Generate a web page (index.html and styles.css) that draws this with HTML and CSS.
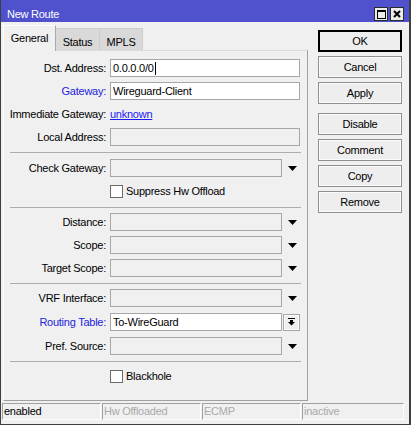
FILE: index.html
```html
<!DOCTYPE html>
<html>
<head>
<meta charset="utf-8">
<title>New Route</title>
<link rel="stylesheet" href="styles.css">
</head>
<body>
<div class="window">
  <div class="titlebar">
    <span class="title">New Route</span>
    <div class="tb-btns">
      <span class="tb-btn"><svg width="9" height="9" viewBox="0 0 9 9"><rect x="0.5" y="0.5" width="8" height="8" fill="none" stroke="#000"/><rect x="0" y="0" width="9" height="2" fill="#000"/></svg></span>
      <span class="tb-btn"><svg width="8" height="8" viewBox="0 0 8 8"><path d="M1 1 L7 7 M7 1 L1 7" stroke="#000" stroke-width="2" fill="none"/></svg></span>
    </div>
  </div>
  <div class="main">
    <div class="left">
      <div class="tabs">
        <div class="tab active">General</div>
        <div class="tab t-status">Status</div>
        <div class="tab t-mpls">MPLS</div>
      </div>
      <div class="panel">
        <div class="group g1">
          <div class="row"><span class="lbl">Dst. Address:</span><div class="field filled">0.0.0.0/0<span class="caret"></span></div></div>
          <div class="row"><span class="lbl blue">Gateway:</span><div class="field filled">Wireguard-Client</div></div>
          <div class="row"><span class="lbl">Immediate Gateway:</span><span class="link">unknown</span></div>
          <div class="row"><span class="lbl">Local Address:</span><div class="field"></div></div>
        </div>
        <div class="sep"></div>
        <div class="group g2">
          <div class="row"><span class="lbl">Check Gateway:</span><div class="field short"></div><span class="arrow"><svg width="9" height="5" viewBox="0 0 9 5"><polygon points="0,0 9,0 4.5,5" fill="#000"/></svg></span></div>
          <div class="row"><span class="lbl"></span><span class="check"></span><span class="check-text">Suppress Hw Offload</span></div>
        </div>
        <div class="sep"></div>
        <div class="group g3">
          <div class="row"><span class="lbl">Distance:</span><div class="field short"></div><span class="arrow"><svg width="9" height="5" viewBox="0 0 9 5"><polygon points="0,0 9,0 4.5,5" fill="#000"/></svg></span></div>
          <div class="row"><span class="lbl">Scope:</span><div class="field short"></div><span class="arrow"><svg width="9" height="5" viewBox="0 0 9 5"><polygon points="0,0 9,0 4.5,5" fill="#000"/></svg></span></div>
          <div class="row"><span class="lbl">Target Scope:</span><div class="field short"></div><span class="arrow"><svg width="9" height="5" viewBox="0 0 9 5"><polygon points="0,0 9,0 4.5,5" fill="#000"/></svg></span></div>
        </div>
        <div class="sep"></div>
        <div class="group g4">
          <div class="row"><span class="lbl">VRF Interface:</span><div class="field short"></div><span class="arrow"><svg width="9" height="5" viewBox="0 0 9 5"><polygon points="0,0 9,0 4.5,5" fill="#000"/></svg></span></div>
          <div class="row"><span class="lbl blue">Routing Table:</span><div class="field short filled">To-WireGuard</div><span class="ddbtn"><svg width="7" height="8" viewBox="0 0 7 8"><rect x="0" y="0" width="7" height="1" fill="#000"/><rect x="2" y="2" width="3" height="2" fill="#000"/><polygon points="0,4 7,4 3.5,7.5" fill="#000"/></svg></span></div>
          <div class="row"><span class="lbl">Pref. Source:</span><div class="field short"></div><span class="arrow"><svg width="9" height="5" viewBox="0 0 9 5"><polygon points="0,0 9,0 4.5,5" fill="#000"/></svg></span></div>
        </div>
        <div class="sep"></div>
        <div class="group g5">
          <div class="row"><span class="lbl"></span><span class="check"></span><span class="check-text">Blackhole</span></div>
        </div>
      </div>
    </div>
    <div class="buttons">
      <div class="btn default">OK</div>
      <div class="btn">Cancel</div>
      <div class="btn">Apply</div>
      <div class="btn spaced">Disable</div>
      <div class="btn">Comment</div>
      <div class="btn">Copy</div>
      <div class="btn">Remove</div>
    </div>
  </div>
  <div class="statusbar">
    <div class="sfield">enabled</div>
    <div class="sfield dim">Hw Offloaded</div>
    <div class="sfield dim">ECMP</div>
    <div class="sfield dim last">inactive</div>
  </div>
</div>
</body>
</html>
```

FILE: styles.css
```css
* { box-sizing: border-box; }
html, body { margin: 0; padding: 0; }
body {
  width: 411px;
  height: 425px;
  overflow: hidden;
  background: #f0f0f0;
  font-family: "Liberation Sans", Arial, sans-serif;
  font-size: 11px;
  letter-spacing: -0.25px;
  color: #000;
}
.window {
  width: 411px;
  height: 425px;
  display: flex;
  flex-direction: column;
  background: #f0f0f0;
  border-left: 1px solid #3f3f3f;
  border-right: 2px solid #3f3f3f;
  border-bottom: 1px solid #3f3f3f;
}
.titlebar {
  height: 22px;
  flex: none;
  background: #4f52cc;
  color: #fff;
  display: flex;
  align-items: flex-end;
  justify-content: space-between;
  padding: 0 5px 1px 6px;
}
.title { line-height: 14px; }
.tb-btns { display: flex; gap: 2px; }
.tb-btn {
  width: 14px;
  height: 14px;
  background: #ececec;
  border: 1px solid #2b2b2b;
  display: flex;
  align-items: center;
  justify-content: center;
}
.main {
  display: flex;
  padding: 3px 0 0 2px;
  flex: none;
}
.left { width: 305px; }
.tabs {
  display: flex;
  height: 25px;
  align-items: flex-end;
}
.tab {
  height: 22px;
  padding-top: 4px;
  line-height: 18px;
  text-align: center;
  background: #d9d9d9;
  border: 1px solid #cdcdcd;
  border-bottom: none;
  border-left: none;
}
.tab.active {
  width: 53px;
  height: 26px;
  margin-bottom: -1px;
  padding-top: 4px;
  line-height: 16px;
  background: #f0f0f0;
  border-left: 1px solid #fdfdfd;
  border-top: 1px solid #fdfdfd;
  border-right: 1px solid #a9a9a9;
  position: relative;
  z-index: 1;
}
.t-status { width: 44px; }
.t-mpls { width: 43px; }
.panel {
  height: 351px;
  border-top: 1px solid #dadada;
  border-left: 1px solid #fdfdfd;
  border-right: 1px solid #a0a0a0;
  border-bottom: 1px solid #a0a0a0;
}
.group .row + .row { margin-top: 5px; }
.g1 { padding: 8px 0 6px; }
.g2 { padding: 6px 0 7px; }
.g3 { padding: 5px 0 6px; }
.g4 { padding: 5px 0 6px; }
.g4 .row + .row { margin-top: 6px; }
.g5 { padding: 5px 0 0; }
.row {
  display: flex;
  align-items: center;
  height: 18px;
}
.lbl {
  width: 102px;
  margin-right: 4px;
  text-align: right;
  white-space: nowrap;
  flex: none;
}
.blue { color: #2323dc; }
.link { color: #1b1bf5; text-decoration: underline; }
.field {
  width: 190px;
  height: 18px;
  border: 1px solid #a7a7a7;
  background: #f0f0f0;
  padding-left: 2px;
  line-height: 16px;
  display: flex;
  align-items: center;
}
.field.filled { background: #fff; }
.field.short { width: 172px; }
.caret {
  display: inline-block;
  width: 1px;
  height: 13px;
  background: #000;
  margin-left: 1px;
}
.arrow {
  width: 18px;
  padding-left: 3px;
  display: flex;
  justify-content: center;
}
.ddbtn {
  width: 17px;
  height: 17px;
  margin-left: 1px;
  border: 1px solid #a7a7a7;
  background: #eeeeee;
  box-shadow: inset 0 0 0 1px #fbfbfb;
  display: flex;
  align-items: center;
  justify-content: center;
}
.check {
  width: 13px;
  height: 13px;
  border: 1px solid #6a6a6a;
  background: #fff;
  flex: none;
}
.check-text { margin-left: 3px; }
.sep {
  height: 1px;
  background: #adadad;
  margin: 0 6px;
}
.buttons {
  margin-left: 10px;
  margin-top: 5px;
  width: 84px;
  display: flex;
  flex-direction: column;
}
.btn {
  height: 22px;
  border: 1px solid #8f8f8f;
  background: #eeeeee;
  box-shadow: inset 0 0 0 1px #fcfcfc;
  text-align: center;
  line-height: 20px;
}
.btn + .btn { margin-top: 4px; }
.btn.spaced { margin-top: 9px; }
.btn.default {
  border-color: #000;
  box-shadow: inset 0 0 0 1px #000;
}
.statusbar {
  display: flex;
  gap: 1px;
  height: 17px;
  margin: 2px 5px 0 1px;
  flex: none;
}
.sfield {
  width: 99px;
  border-top: 1px solid #a0a0a0;
  border-left: 1px solid #a0a0a0;
  border-right: 1px solid #fff;
  border-bottom: 1px solid #fff;
  padding-left: 1px;
  line-height: 15px;
  white-space: nowrap;
}
.sfield.dim { color: #aaaaaa; }
.sfield.last { flex: 1; }
```
